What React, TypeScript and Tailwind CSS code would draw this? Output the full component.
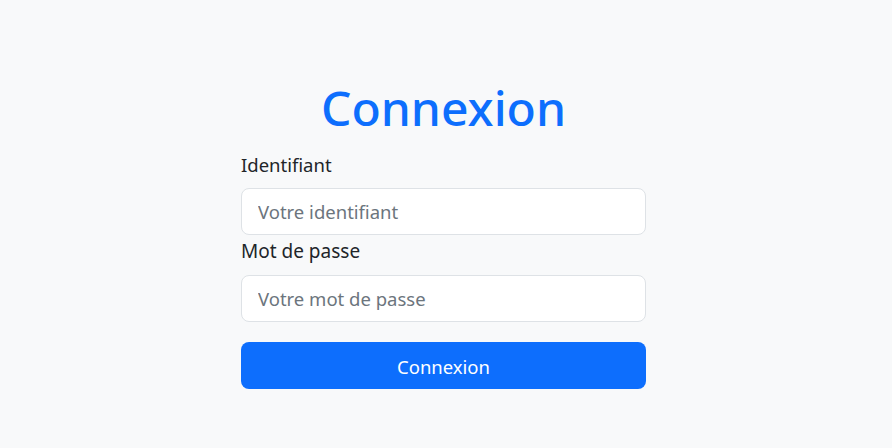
import React from "react";

export default function App() {
  return (
    <div
      className="min-h-screen w-full bg-[#f8f9fa] text-[#212529]"
      style={{ fontFamily: '"Noto Sans", "Open Sans", sans-serif' }}
    >
      <div className="ml-[241px] w-[405px] pt-[79px]">
        <h1 className="text-center text-[48px] leading-[58px] font-medium text-[#0d6efd]">
          Connexion
        </h1>
        <form className="mt-[11px] flex flex-col" onSubmit={(e) => e.preventDefault()}>
          <label className="block pt-[3px] pb-[10px] text-[18.5px] leading-[27px]">Identifiant</label>
          <input
            type="text"
            placeholder="Votre identifiant"
            className="h-[47px] w-full rounded-lg border border-[#dee2e6] bg-white px-4 text-[18.5px] text-[#212529] outline-none placeholder:text-[#6c757d]"
          />
          <label className="block pt-[3px] pb-[10px] text-[19px] leading-[27px]">Mot de passe</label>
          <input
            type="password"
            placeholder="Votre mot de passe"
            className="h-[47px] w-full rounded-lg border border-[#dee2e6] bg-white px-4 text-[18.5px] text-[#212529] outline-none placeholder:text-[#6c757d]"
          />
          <button
            type="submit"
            className="mt-[20px] h-[47px] w-full rounded-lg bg-[#0d6efd] pt-[3px] text-[18.5px] text-white"
          >
            Connexion
          </button>
        </form>
      </div>
    </div>
  );
}
